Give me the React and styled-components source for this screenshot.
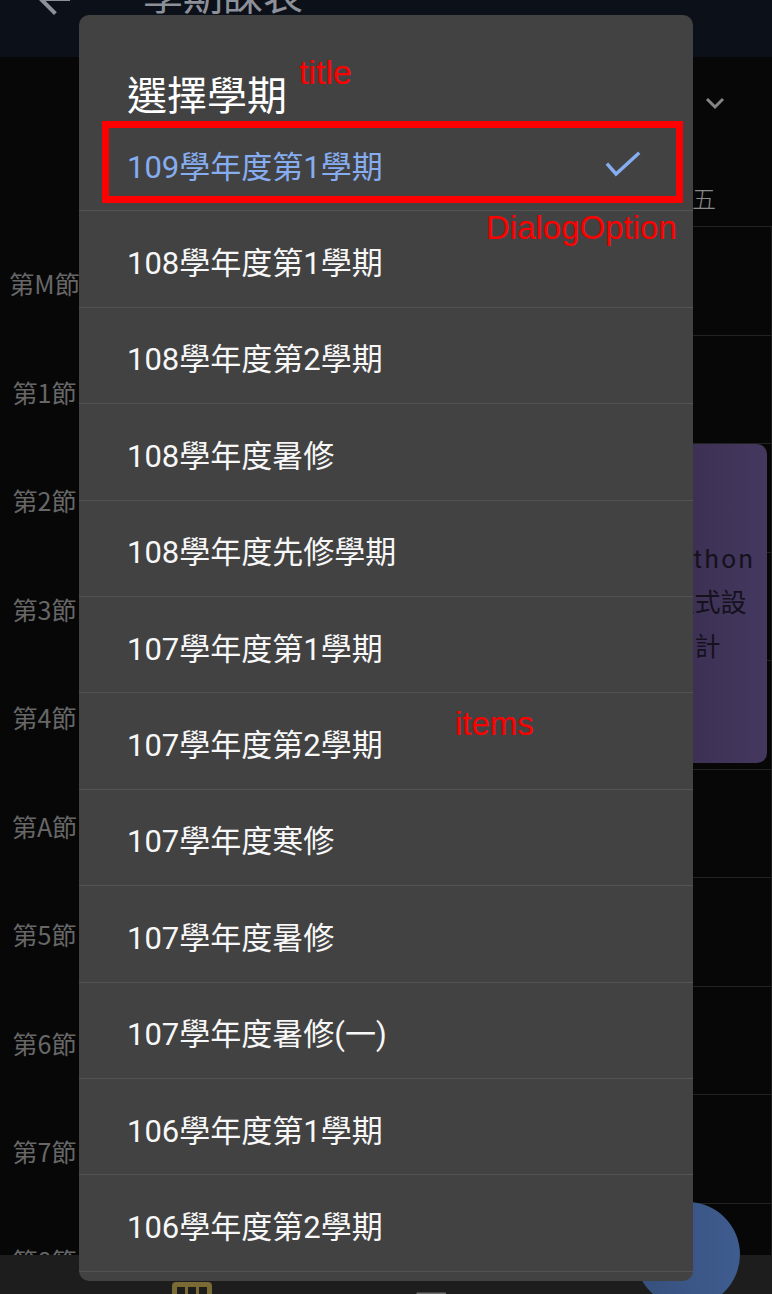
import React from "react";
import styled, { createGlobalStyle } from "styled-components";

const GlobalStyle = createGlobalStyle`
  html, body { margin: 0; padding: 0; background: #070707; }
  body { font-family: "Roboto", "Noto Sans CJK TC", sans-serif; overflow: hidden; }
  * { box-sizing: border-box; }
`;

const Screen = styled.div`
  position: relative;
  width: 772px;
  height: 1294px;
  overflow: hidden;
  display: flex;
  flex-direction: column;
  background: #070707;
`;

const AppBar = styled.header`
  flex: 0 0 57px;
  background: #0b1019;
  display: flex;
  align-items: flex-start;
  padding-left: 30px;
  overflow: hidden;
`;

const BackIcon = styled.svg`
  width: 48px;
  height: 48px;
  margin-top: -25px;
  fill: #8d9098;
  flex: none;
`;

const AppTitle = styled.h1`
  margin: -27px 0 0 65px;
  font-family: "Noto Sans CJK TC", sans-serif;
  font-weight: 400;
  font-size: 40px;
  line-height: 40px;
  color: #8d9098;
`;

const Body = styled.main`
  flex: 1;
  min-height: 0;
  overflow: hidden;
  display: flex;
  flex-direction: column;
`;

const HeaderArea = styled.div`
  flex: 0 0 169px;
  display: flex;
  flex-direction: column;
`;

const ChevronRow = styled.div`
  display: flex;
  justify-content: flex-end;
  padding: 40px 47px 0 0;
`;

const Chevron = styled.svg`
  width: 20px;
  height: 13px;
  stroke: #858585;
  fill: none;
  stroke-width: 3;
`;

const DayRow = styled.div`
  margin-top: auto;
  height: 58px;
  display: grid;
  grid-template-columns: 92px repeat(5, 1fr);
  align-items: center;
`;

const DayLabel = styled.div`
  text-align: center;
  font-family: "Noto Sans CJK TC", serif;
  font-size: 24px;
  font-weight: 300;
  color: #8a8a8a;
`;

const Timetable = styled.div`
  display: grid;
  grid-template-columns: 92px repeat(5, 1fr);
  grid-auto-rows: 108.5px;
`;

const TimeCell = styled.div`
  grid-row: ${(p) => p.$row};
  grid-column: 1;
  display: flex;
  align-items: center;
  justify-content: center;
  padding: 6px 3px 0 0;
  font-family: "Noto Sans CJK TC", sans-serif;
  font-size: 25px;
  color: #676767;
  white-space: nowrap;
`;

const DayCell = styled.div`
  grid-row: ${(p) => p.$row};
  grid-column: ${(p) => p.$col};
  border-top: 1px solid #222;
  border-right: ${(p) => (p.$col === 6 ? "1px solid #1c1c1c" : "none")};
`;

const Course = styled.div`
  grid-row: ${(p) => p.$row} / span ${(p) => p.$span};
  grid-column: ${(p) => p.$col};
  z-index: 1;
  margin: 1px 5px 6px 4px;
  border-radius: 10px;
  background: linear-gradient(90deg, #362c4c, #45385f);
  display: flex;
  align-items: center;
  justify-content: center;
  text-align: center;
  font-family: "Roboto", "Noto Sans CJK TC", sans-serif;
  font-size: 26px;
  line-height: 44px;
  color: #15111d;
  padding-left: 8px;
`;

const CourseLatin = styled.span`
  letter-spacing: 2.5px;
`;

const BottomNav = styled.nav`
  flex: 0 0 39px;
  background: #1d1d1d;
  display: grid;
  grid-template-columns: repeat(3, 240px);
  padding: 27px 0 0 72px;
  overflow: hidden;
`;

const NavItem = styled.div`
  display: flex;
  justify-content: center;
  padding-top: ${(p) => p.$pad || 0}px;
`;

const Fab = styled.div`
  position: absolute;
  left: 635px;
  top: 1202px;
  width: 105px;
  height: 105px;
  border-radius: 50%;
  background: linear-gradient(90deg, #36507c, #3f5c8f);
  display: flex;
  align-items: center;
  justify-content: center;
`;

const Dialog = styled.section`
  position: absolute;
  top: 15px;
  left: 79px;
  width: 614px;
  height: 1266px;
  background: #424242;
  border-radius: 10px;
  overflow: hidden;
  display: flex;
  flex-direction: column;
  z-index: 5;
`;

const DialogTitle = styled.h2`
  margin: 0 0 2px;
  padding: 58px 48px 0;
  font-family: "Noto Sans CJK TC", sans-serif;
  font-weight: 400;
  font-size: 40px;
  line-height: 40px;
  color: #ffffff;
`;

const OptionList = styled.ul`
  list-style: none;
  margin: 0;
  padding: 0;
`;

const Option = styled.li`
  height: 96.4px;
  border-bottom: 1px solid #535353;
  display: flex;
  align-items: center;
  justify-content: space-between;
  padding: 9px 54px 0 48px;
  font-size: 31px;
  line-height: 31px;
  color: ${(p) => (p.$selected ? "#86adf0" : "#f7f7f7")};
`;

const Check = styled.svg`
  width: 36px;
  height: 27px;
  margin: 0 -2px 6px 0;
  fill: none;
  stroke: #86adf0;
  stroke-width: 3.4;
  stroke-linecap: square;
`;

const AnnotText = styled.div`
  position: absolute;
  z-index: 10;
  left: ${(p) => p.$left}px;
  top: ${(p) => p.$top}px;
  font-family: "Liberation Sans", Arial, sans-serif;
  font-size: ${(p) => p.$size}px;
  line-height: 1;
  color: #ff0000;
  white-space: nowrap;
`;

const AnnotBox = styled.div`
  position: absolute;
  z-index: 10;
  left: 102px;
  top: 121px;
  width: 581px;
  height: 82px;
  border: 7px solid #ff0000;
`;

const periods = ["第M節", "第1節", "第2節", "第3節", "第4節", "第A節", "第5節", "第6節", "第7節", "第8節"];
const days = ["一", "二", "三", "四", "五"];
const semesters = [
  "109學年度第1學期",
  "108學年度第1學期",
  "108學年度第2學期",
  "108學年度暑修",
  "108學年度先修學期",
  "107學年度第1學期",
  "107學年度第2學期",
  "107學年度寒修",
  "107學年度暑修",
  "107學年度暑修(一)",
  "106學年度第1學期",
  "106學年度第2學期",
];

export default function App() {
  return (
    <>
      <GlobalStyle />
      <Screen>
        <AppBar>
          <BackIcon viewBox="0 0 24 24">
            <path d="M20 11H7.83l5.59-5.59L12 4l-8 8 8 8 1.41-1.41L7.83 13H20v-2z" />
          </BackIcon>
          <AppTitle>學期課表</AppTitle>
        </AppBar>
        <Body>
          <HeaderArea>
            <ChevronRow>
              <Chevron viewBox="0 0 20 13">
                <polyline points="2,2 10,10 18,2" />
              </Chevron>
            </ChevronRow>
            <DayRow>
              <span />
              {days.map((d) => (
                <DayLabel key={d}>{d}</DayLabel>
              ))}
            </DayRow>
          </HeaderArea>
          <Timetable>
            {periods.map((p, i) => (
              <React.Fragment key={p}>
                <TimeCell $row={i + 1}>{p}</TimeCell>
                {[2, 3, 4, 5, 6].map((c) => (
                  <DayCell key={c} $row={i + 1} $col={c} />
                ))}
              </React.Fragment>
            ))}
            <Course $row={3} $span={3} $col={6}>
              <div>
                <CourseLatin>Python</CourseLatin>
                <br />
                程式設
                <br />計
              </div>
            </Course>
          </Timetable>
        </Body>
        <BottomNav>
          <NavItem>
            <svg width="40" height="40" viewBox="0 0 40 40">
              <rect x="0" y="0" width="40" height="40" rx="4" fill="#7a6a34" />
              <rect x="5" y="5" width="8" height="10" fill="#1d1d1d" />
              <rect x="16" y="5" width="8" height="10" fill="#1d1d1d" />
              <rect x="27" y="5" width="8" height="10" fill="#1d1d1d" />
            </svg>
          </NavItem>
          <NavItem $pad={8}>
            <svg width="34" height="30" viewBox="0 0 34 30">
              <path d="M3 14V4h28" fill="none" stroke="#6e6e6e" strokeWidth="3" />
            </svg>
          </NavItem>
          <NavItem />
        </BottomNav>
        <Fab>
          <svg width="40" height="40" viewBox="0 0 40 40" style={{ marginLeft: 10, marginTop: 22 }}>
            <path d="M4 6l8 8-3 3z" fill="#0d0d14" />
          </svg>
        </Fab>
        <Dialog>
          <DialogTitle>選擇學期</DialogTitle>
          <OptionList>
            {semesters.map((s, i) => (
              <Option key={s} $selected={i === 0}>
                <span>{s}</span>
                {i === 0 && (
                  <Check viewBox="0 0 36 27">
                    <polyline points="3,14 11,23 33,3" />
                  </Check>
                )}
              </Option>
            ))}
          </OptionList>
        </Dialog>
        <AnnotText $left={299} $top={55} $size={34}>title</AnnotText>
        <AnnotBox />
        <AnnotText $left={486} $top={211} $size={33}>DialogOption</AnnotText>
        <AnnotText $left={455} $top={707} $size={33}>items</AnnotText>
      </Screen>
    </>
  );
}
